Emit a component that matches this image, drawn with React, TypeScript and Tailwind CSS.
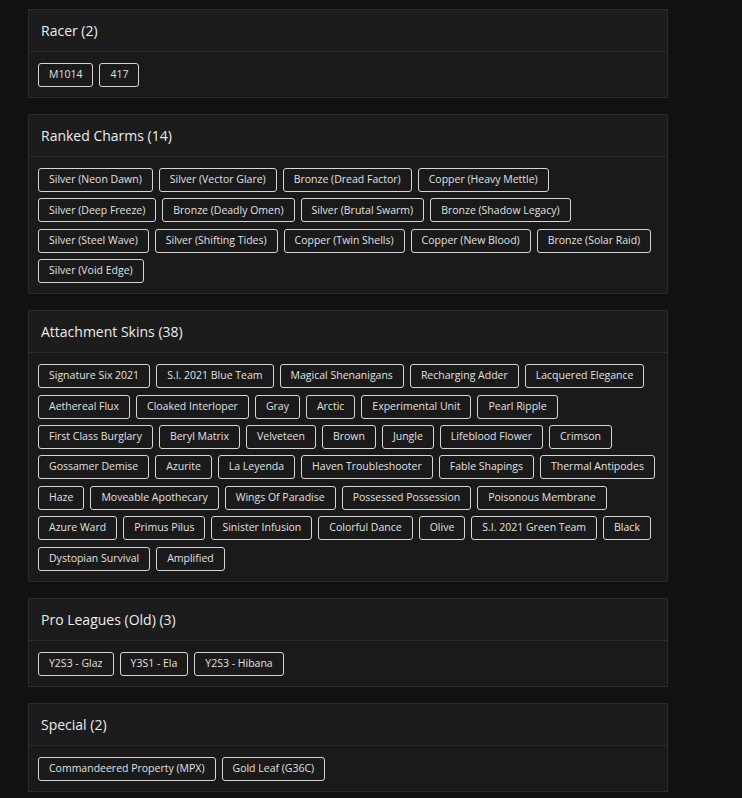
import React from "react";

interface Group {
    title: string;
    items: string[];
}

const groups: Group[] = [
    { title: "Racer", items: ["M1014", "417"] },
    {
        title: "Ranked Charms",
        items: [
            "Silver (Neon Dawn)", "Silver (Vector Glare)", "Bronze (Dread Factor)", "Copper (Heavy Mettle)",
            "Silver (Deep Freeze)", "Bronze (Deadly Omen)", "Silver (Brutal Swarm)", "Bronze (Shadow Legacy)",
            "Silver (Steel Wave)", "Silver (Shifting Tides)", "Copper (Twin Shells)", "Copper (New Blood)", "Bronze (Solar Raid)",
            "Silver (Void Edge)",
        ],
    },
    {
        title: "Attachment Skins",
        items: [
            "Signature Six 2021", "S.I. 2021 Blue Team", "Magical Shenanigans", "Recharging Adder", "Lacquered Elegance",
            "Aethereal Flux", "Cloaked Interloper", "Gray", "Arctic", "Experimental Unit", "Pearl Ripple",
            "First Class Burglary", "Beryl Matrix", "Velveteen", "Brown", "Jungle", "Lifeblood Flower", "Crimson",
            "Gossamer Demise", "Azurite", "La Leyenda", "Haven Troubleshooter", "Fable Shapings", "Thermal Antipodes",
            "Haze", "Moveable Apothecary", "Wings Of Paradise", "Possessed Possession", "Poisonous Membrane",
            "Azure Ward", "Primus Pilus", "Sinister Infusion", "Colorful Dance", "Olive", "S.I. 2021 Green Team", "Black",
            "Dystopian Survival", "Amplified",
        ],
    },
    { title: "Pro Leagues (Old)", items: ["Y2S3 - Glaz", "Y3S1 - Ela", "Y2S3 - Hibana"] },
    { title: "Special", items: ["Commandeered Property (MPX)", "Gold Leaf (G36C)"] },
];

function GroupCard({ group }: { group: Group }) {
    return (
        <div className="border border-[#2a2a2a] bg-[#1a1a1a]">
            {/* Header */}
            <div className="h-[42px] flex items-center px-3 border-b border-[#2a2a2a] bg-[#1c1c1c]">
                <h2 className="text-[14px] font-medium text-[#ececec]">
                    {group.title} ({group.items.length})
                </h2>
            </div>

            {/* Items */}
            <div className="flex flex-wrap gap-x-[6px] gap-y-[6.4px] px-[9px] pt-[11px] pb-[10px]">
                {group.items.map((item) => (
                    <span
                        key={item}
                        className="h-[24px] flex items-center px-[10px] rounded-[3px] border border-[#d6d6d6] text-[10.5px] text-[#e0e0e0] whitespace-nowrap"
                    >
                        {item}
                    </span>
                ))}
            </div>
        </div>
    );
}

export default function App() {
    return (
        <div
            className="min-h-screen bg-[#111111] pt-[9px] pb-4"
            style={{ fontFamily: '"Open Sans", "Noto Sans", sans-serif' }}
        >
            <div className="ml-[28px] w-[640px] flex flex-col gap-4">
                {groups.map((g) => (
                    <GroupCard key={g.title} group={g} />
                ))}
            </div>
        </div>
    );
}
